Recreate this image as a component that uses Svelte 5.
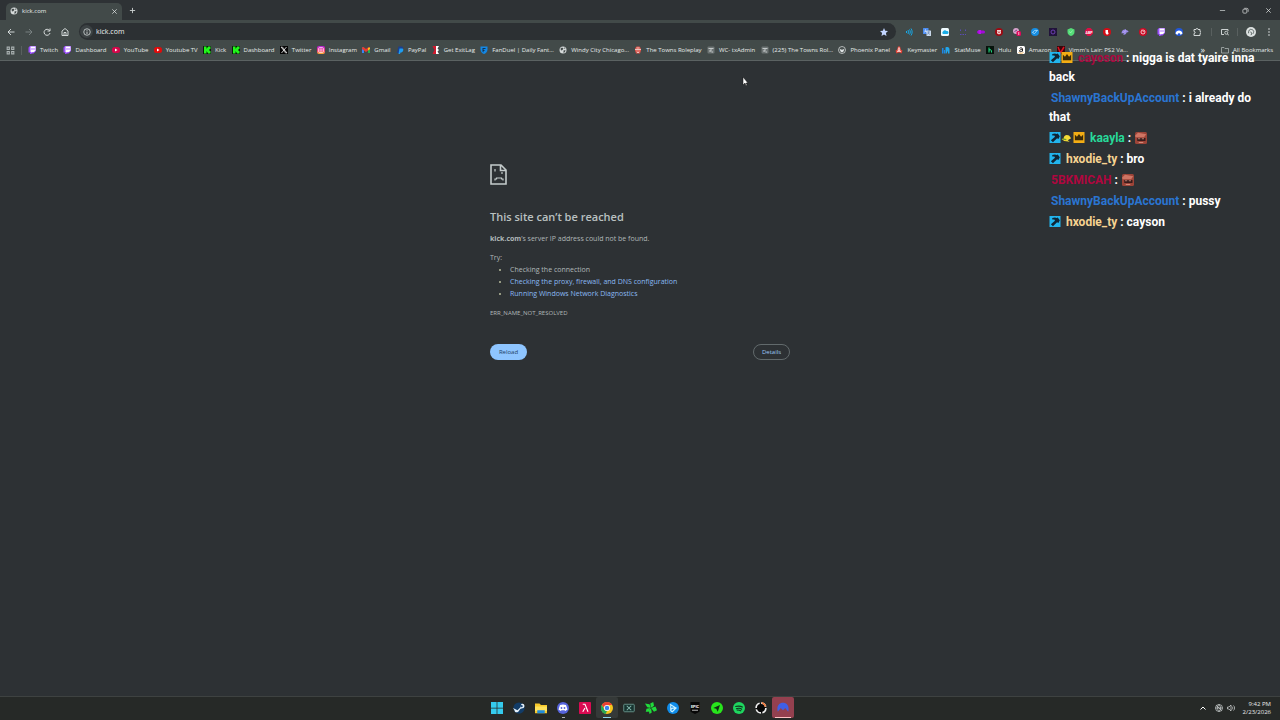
<script>
  const globe = '<circle cx="8" cy="8" r="7" fill="#d5dada"/><path d="M3 5l3-2 3 2-2 3-3 1zM9 9l4-1-1 4-3 2zM10 2l3 3-2 1z" fill="#454c4c"/>';
  const twitch = '<path d="M1 3L4 0h12v10l-5 5H8l-2 1H4v-3H1z" fill="#9b4dff"/><path d="M5 1h10v8l-3 3H9l-2 2v-2H5z" fill="#fff"/><path d="M8 4v4M12 4v4" stroke="#9b4dff" stroke-width="1.6"/>';
  const kick = '<rect width="16" height="16" rx="1" fill="#0b1a0b"/><path d="M2 1h5v4h1V3h2V1h5v5h-2v4h2v5h-5v-2H8v-2H7v4H2z" fill="#21f51b"/>';
  const admin = '<rect x="1" y="1" width="14" height="14" rx="2" fill="#6d7474"/><path d="M3 5h10M5 8l2 2-2 2M9 12h3M8 6v5" stroke="#d7dcdc" stroke-width="1.6" fill="none"/>';
  const youtube = (c) => `<rect y="2" width="16" height="12" rx="5" fill="${c}"/><path d="M6 5l5 3-5 3z" fill="#fff"/>`;
  const swirl = '<path d="M1 11c0-5 3-8 7-8l2-1v2c3 0 5 2 5 4l-4 1c0 3-3 5-7 4l2-3z" fill="#9c8be8"/><path d="M5 9l5-4" stroke="#cfc6ff"/>';

  const art = {
    globe, twitch, kick, admin, swirl,
    youtube: youtube('#d5064a'),
    youtubetv: youtube('#e00b0b'),
    x: '<rect width="16" height="16" fill="#050505"/><path d="M3 2l10 12M13 2L3 14" stroke="#fff" stroke-width="1.5"/><path d="M2 2h3l9 12h-3z" fill="none" stroke="#fff"/>',
    instagram: '<defs><linearGradient id="ig" x2="0" y2="1"><stop stop-color="#b125db"/><stop offset=".55" stop-color="#f42f80"/><stop offset="1" stop-color="#ffb62e"/></linearGradient></defs><rect width="16" height="16" rx="4" fill="url(#ig)"/><rect x="3" y="3" width="10" height="10" rx="3" fill="none" stroke="#fff" stroke-width="1.3"/><circle cx="8" cy="8" r="2.4" fill="none" stroke="#fff" stroke-width="1.3"/>',
    gmail: '<path d="M0 3h4v11H0z" fill="#3784f5"/><path d="M12 3h4v11h-4z" fill="#22b04c"/><path d="M0 3l3-1 5 4 5-4 3 1v3l-8 6-8-6z" fill="#e83b2f"/><path d="M12 4l4-1v3l-4 3z" fill="#fcc21a"/>',
    paypal: '<path d="M5 1h6c3 0 4 3 3 5s-3 4-6 4l-1 4H2z" fill="#1b3f91"/><path d="M7 5h6c2 1 2 3 1 5s-3 3-5 3l-1 3H5z" fill="#1e9df0"/>',
    exitlag: '<path d="M1 0h7v16H1l4-8z" fill="#d1192e"/><path d="M8 0h6l-3 5 3 3-3 3 3 5H8z" fill="#fff"/>',
    fanduel: '<path d="M1 1h14v6c0 5-4 8-7 9-3-1-7-4-7-9z" fill="#1387e5"/><path d="M5 4h7l-2 2H7v2h3l-2 2H7v3L5 11z" fill="#15304d"/>',
    towns: '<path d="M2 5l3-4h6l3 4v4l-2 6H4L2 9z" fill="#d9534a"/><path d="M2 7h12M5 4h6M5 10h2M9 10h2M6 13h4" stroke="#f3ded8" stroke-width="1.6"/>',
    phoenix: '<circle cx="8" cy="8" r="7" fill="none" stroke="#dfe4e4" stroke-width="1.4"/><path d="M3 5l4 3 1-3 1 3 4-3-2 6-3 2-3-2z" fill="#dfe4e4"/>',
    keymaster: '<path d="M6 1h4l2 7 3 1-2 6-4-2H7l-4 2-2-6 3-1z" fill="#e64438"/><path d="M8 3l2 6H6zM4 11h8" stroke="#fff" stroke-width="1.3" fill="none"/>',
    statmuse: '<path d="M0 4h3v11H0zM4 8h2v7H4z" fill="#1e88e5"/><path d="M7 3c5-2 8 0 8 4v8h-3V9l-3 6H7z" fill="#21a6ed"/>',
    hulu: '<rect width="16" height="16" fill="#07130c"/><path d="M6 3v10M6 8c4-2 5 0 5 5" stroke="#21e584" stroke-width="2" fill="none"/>',
    amazon: '<rect width="16" height="16" rx="3" fill="#fff"/><path d="M5 5c1-2 6-2 6 1v5M11 7c-4 0-6 1-6 3s4 2 6-1" stroke="#111" stroke-width="1.8" fill="none"/><path d="M3 13c3 2 7 2 10 0" stroke="#f39c20" stroke-width="1.4" fill="none"/>',
    vimm: '<rect width="16" height="16" fill="#38080c"/><path d="M2 2l5 12 7-12" stroke="#dc1120" stroke-width="3" fill="none"/>',

    sound: '<path d="M3 6v4M6 4c1 3 1 5 0 8M9 3c2 3 2 7 0 10M12 1c3 4 3 10 0 14" stroke="#18a8e6" stroke-width="2" fill="none"/>',
    translate: '<rect width="11" height="12" rx="1" fill="#4c8df0"/><rect x="7" y="5" width="9" height="11" rx="1" fill="#c9d8ea"/><path d="M3 9l2-6 2 6M4 7h3" stroke="#fff" fill="none"/><path d="M9 8h5M11 7c0 3-1 4-2 6M10 10l4 3" stroke="#4b6ea5" fill="none"/>',
    cloud: '<rect width="16" height="16" rx="3" fill="#effbff"/><path d="M4 12a3 3 0 010-5 4 4 0 017-1 3 3 0 012 6z" fill="#19aee8"/>',
    dots: '<path d="M3 3v3M13 3v3M2 13h3M7 13h3M12 13h2" stroke="#5a4bb8" stroke-width="2"/>',
    pill: '<rect y="5" width="16" height="6" rx="3" fill="#a408d9"/><path d="M3 4h5v8H3z" fill="#b812ec"/>',
    shield: '<circle cx="8" cy="8" r="8" fill="#9c0a13"/><path d="M4 4h8v5c0 2-2 3-4 4-2-1-4-2-4-4z" fill="#fff"/><path d="M6 5v3c0 3 4 3 4 0V5" stroke="#a00" stroke-width="1.4" fill="none"/>',
    badge: '<circle cx="6" cy="6" r="6" fill="#d8a3cd"/><path d="M3 7l5-3" stroke="#71477c" stroke-width="2"/><rect x="7" y="6" width="9" height="10" rx="3" fill="#df0759"/><path d="M11.500 8v6" stroke="#fff" stroke-width="1.4"/>',
    blue: '<circle cx="8" cy="8" r="8" fill="#168de2"/><path d="M3 9c3-4 5-5 10-4-3 1-3 4-6 6z" fill="none" stroke="#bde6ff" stroke-width="1.6"/>',
    ring: '<rect width="16" height="16" fill="#21133a"/><circle cx="8" cy="8" r="4" fill="none" stroke="#7343bd" stroke-width="1.8"/>',
    green: '<path d="M8 0l7 3v5c0 4-3 7-7 8-4-1-7-4-7-8V3z" fill="#55dc78"/><path d="M5 7l2 3 4-5" stroke="#b9ffc9" stroke-width="1.2" fill="none"/>',
    abp: '<path d="M5 0h6l5 5v6l-5 5H5l-5-5V5z" fill="#db0f45"/><text x="8" y="11" text-anchor="middle" font-family="Roboto, sans-serif" font-size="7" font-weight="700" fill="#fff">ABP</text>',
    hand: '<circle cx="8" cy="8" r="8" fill="#d30c16"/><path d="M5 5v5l2 3h3l2-4-2 1V4H5z" fill="#fff"/>',
    record: '<circle cx="8" cy="8" r="8" fill="#c80b25"/><circle cx="8" cy="8" r="4" fill="none" stroke="#fff" stroke-width="1.5"/><path d="M5 4l5 4" stroke="#ff8b94" stroke-width="2"/>',
    arc: '<circle cx="8" cy="8" r="8" fill="#2257d8"/><path d="M1 11c1-8 13-8 14 0l-4 3c0-5-6-5-6 0z" fill="#fff"/>',
    puzzle: '<path d="M2 3h4c0-3 4-3 4 0h4v4c3 0 3 4 0 4v4H2v-4c3 0 3-4 0-4z" fill="none" stroke="#e1e5e5" stroke-width="1.8"/>',
    search: '<path d="M6 13H1V3h13v3" fill="none" stroke="#dce1e1" stroke-width="1.8"/><circle cx="10.500" cy="9.500" r="3" fill="none" stroke="#dce1e1" stroke-width="1.6"/><path d="M13 12l3 3" stroke="#dce1e1" stroke-width="1.8"/>',
    avatar: '<circle cx="8" cy="8" r="8" fill="#dce1e0"/><path d="M4 10c0-5 2-7 5-6 4 1 4 4 2 7M7 8c2 0 3 2 1 5" stroke="#5d6867" stroke-width="1.6" fill="none"/>',
    menu: '<circle cx="8" cy="2" r="1.600" fill="#dce1e1"/><circle cx="8" cy="8" r="1.600" fill="#dce1e1"/><circle cx="8" cy="14" r="1.600" fill="#dce1e1"/>',

    back: '<path d="M15 8H2M8 2L2 8l6 6" stroke="#dfe4e4" stroke-width="1.8" fill="none"/>',
    forward: '<path d="M1 8h13M8 2l6 6-6 6" stroke="#7e8686" stroke-width="1.8" fill="none"/>',
    reload: '<path d="M13 5a6 6 0 101 5M14 1v5H9" stroke="#dfe4e4" stroke-width="1.900" fill="none"/>',
    home: '<path d="M2 6l6-5 6 5v9H2z" fill="none" stroke="#dfe4e4" stroke-width="1.800"/><path d="M6 14V9h4v5" fill="none" stroke="#dfe4e4" stroke-width="1.800"/>',
    info: '<circle cx="8" cy="8" r="6.500" fill="none" stroke="#dfe4e4" stroke-width="1.500"/><path d="M8 7v5M8 4v1.600" stroke="#dfe4e4" stroke-width="1.600"/>',
    star: '<path d="M8 0l2.400 5.400 5.600.6-4.200 4 1.200 6L8 13l-5 3 1.200-6L0 6l5.600-.6z" fill="#c3d6ff"/>',
    apps: '<path d="M2 2h4v4H2zM10 2h4v4h-4zM2 10h4v4H2zM10 10h4v4h-4z" fill="none" stroke="#aab2b2" stroke-width="1.800"/>',
    folder: '<path d="M1 3h5l2 2h7v9H1z" fill="none" stroke="#b6bdbd" stroke-width="1.400"/>',
    plus: '<path d="M8 2v12M2 8h12" stroke="#cfd4d4" stroke-width="2"/>',
    close: '<path d="M3 3l10 10M13 3L3 13" stroke="#e1e5e5" stroke-width="1.700"/>',
    minimize: '<path d="M2 8h12" stroke="#dfe3e3" stroke-width="1.500"/>',
    restore: '<rect x="2" y="5" width="9" height="9" rx="2" fill="none" stroke="#dfe3e3" stroke-width="1.600"/><path d="M5 3h6c2 0 3 1 3 3v5" fill="none" stroke="#dfe3e3" stroke-width="1.600"/>',

    windows: '<path d="M0 0h7.500v7.500H0zM8.500 0H16v7.500H8.500zM0 8.500h7.500V16H0zM8.500 8.500H16V16H8.500z" fill="#35cbed"/>',
    steam: '<circle cx="8" cy="8" r="7.500" fill="#123c67"/><path d="M0 8l6 3 4-4 1-4c3-2 6 2 3 5l-4 1-3 4c-3 2-5 0-5-2z" fill="#e7f2fb"/><circle cx="11.500" cy="5.500" r="1.500" fill="#1d4877"/>',
    explorer: '<path d="M0 2h6l2 2h8v11H0z" fill="#f8c92b"/><path d="M0 6h16v6H0z" fill="#ffe35c"/><path d="M3 11h10v4H3z" fill="#208cdb"/>',
    discord: '<circle cx="8" cy="8" r="8" fill="#5664dc"/><path d="M4 4c3-1 5-1 8 0l2 6-3 2-1-1H6l-1 1-3-2z" fill="#fff"/><circle cx="6" cy="8" r="1.200" fill="#5664dc"/><circle cx="10" cy="8" r="1.200" fill="#5664dc"/>',
    lambda: '<rect width="16" height="16" rx="1" fill="#d90b52"/><path d="M5 3h3l4 10M8 8l-3 5" stroke="#fff" stroke-width="1.500" fill="none"/>',
    chrome: '<circle cx="8" cy="8" r="8" fill="#f5c51d"/><path d="M1 4a8 8 0 0114 0H8L5 9z" fill="#e94134"/><path d="M1 4l4 7 3 1-2 4A8 8 0 011 4z" fill="#27a755"/><circle cx="8" cy="8" r="4" fill="#fff"/><circle cx="8" cy="8" r="3" fill="#3b84ee"/>',
    capture: '<rect x="1" y="3" width="14" height="10" rx="1" fill="#173430" stroke="#658f87" stroke-width="1.300"/><path d="M5 5l6 6M11 5l-6 6" stroke="#8abcb2" stroke-width="1.400"/>',
    leaf: '<g fill="#20db3b"><path d="M8 8L3 7 0 2l6 1z"/><path d="M8 8l-1-6 4-2 1 5z"/><path d="M8 8l6-2 2 5-4 2z"/><path d="M8 8l1 6-3 2-1-5z"/><path d="M7 8l-2 5-4 0 1-4z"/></g><circle cx="8" cy="8" r="1" fill="#1d4a22"/>',
    battlenet: '<circle cx="8" cy="8" r="8" fill="#108ce9"/><path d="M4 3l8 5-5 5c-4-2-2-6 6-5M5 12V4" stroke="#c9f1ff" stroke-width="1.500" fill="none"/>',
    epic: '<path d="M2 0h12v13l-6 3-6-3z" fill="#070707"/><text x="8" y="8" text-anchor="middle" font-family="Roboto, sans-serif" font-size="5" font-weight="700" fill="#fff">EPIC</text><path d="M4 11h8" stroke="#aaa" stroke-width="1.400"/>',
    arrow: '<circle cx="8" cy="8" r="8" fill="#28e51c"/><path d="M3 8l9-4-3 9-2-4z" fill="#102b14"/>',
    spotify: '<circle cx="8" cy="8" r="8" fill="#1ed65f"/><path d="M3 6c4-1 7-1 10 1M4 9c3-1 6-1 8 1M5 11c2-1 4 0 6 1" stroke="#10351f" stroke-width="1.500" fill="none"/>',
    dial: '<circle cx="8" cy="8" r="6.500" fill="#080808" stroke="#eee" stroke-width="2.200" stroke-dasharray="8 2"/><path d="M9 1a7 7 0 015 5" stroke="#f0793b" stroke-width="2.200" fill="none"/>',
    nord: '<path d="M1 13C-1 4 4 1 8 1s9 3 7 12l-4-5-3 3-3-3z" fill="#405fe6"/>',
    up: '<path d="M3 11l5-5 5 5" stroke="#fff" stroke-width="2" fill="none"/>',
    net: '<circle cx="8" cy="8" r="7" fill="none" stroke="#dde1e1" stroke-width="1.300"/><path d="M1 8h14M8 1c-4 5-4 9 0 14M8 1c4 5 4 9 0 14M3 3l10 10" stroke="#dde1e1" fill="none" stroke-width="1.300"/>',
    volume: '<path d="M1 6h3l4-4v12l-4-4H1z" fill="none" stroke="#e5e8e8" stroke-width="1.300"/><path d="M10 5c2 2 2 4 0 6M13 3c3 3 3 7 0 10" stroke="#e5e8e8" fill="none" stroke-width="1.300"/>',

    axe: '<rect width="16" height="16" fill="#22b5ee"/><path d="M4 3l4-1 2 1 2-1 3 4-2 4-2-1-6 6-3-3 6-5-1-2H4z" fill="#102535"/>',
    crown: '<rect width="16" height="16" fill="#f3ad14"/><path d="M2 4l3 3 3-4 3 4 3-3v8H2z" fill="#3a2a08"/>',
    cap: '<path d="M3 10c0-5 4-7 8-5l3 4-5 3 3 2-8-1-4-3z" fill="#f5dc36"/><path d="M1 10l6 1" stroke="#6b9c2b" stroke-width="2"/>',
    emote: '<rect width="16" height="16" rx="2" fill="#9c4438"/><path d="M0 5l4-4 11 2-3 4H1z" fill="#cf7564"/><path d="M3 8h11v4H3z" fill="#381b1b"/><path d="M4 9h3M9 9h3M5 14h6" stroke="#e6a18e"/>'
  };

  const bookmarks = [
    ['twitch', 'Twitch'], ['twitch', 'Dashboard'], ['youtube', 'YouTube'], ['youtubetv', 'Youtube TV'],
    ['kick', 'Kick'], ['kick', 'Dashboard'], ['x', 'Twitter'], ['instagram', 'Instagram'], ['gmail', 'Gmail'],
    ['paypal', 'PayPal'], ['exitlag', 'Get ExitLag'], ['fanduel', 'FanDuel | Daily Fant...'],
    ['globe', 'Windy City Chicago...'], ['towns', 'The Towns Roleplay'], ['admin', 'WC- txAdmin'],
    ['admin', '(225) The Towns Rol...'], ['phoenix', 'Phoenix Panel'], ['keymaster', 'Keymaster'],
    ['statmuse', 'StatMuse'], ['hulu', 'Hulu'], ['amazon', 'Amazon'], ['vimm', "Vimm's Lair: PS2 Va..."]
  ];
  const extensions = ['sound', 'translate', 'cloud', 'dots', 'pill', 'shield', 'badge', 'blue', 'ring', 'green', 'abp', 'hand', 'swirl', 'record', 'twitch', 'arc', 'puzzle'];
  const apps = ['windows', 'steam', 'explorer', 'discord', 'lambda', 'chrome', 'capture', 'leaf', 'battlenet', 'epic', 'arrow', 'spotify', 'dial', 'nord'];
  const messages = [
    { badges: ['axe', 'crown'], name: 'cayoson', color: '#a8083f', text: 'nigga is dat tyaire inna back' },
    { badges: [], name: 'ShawnyBackUpAccount', color: '#2a75d2', text: 'i already do that' },
    { badges: ['axe', 'cap', 'crown'], name: 'kaayla', color: '#27d99a', emote: true },
    { badges: ['axe'], name: 'hxodie_ty', color: '#f6d391', text: 'bro' },
    { badges: [], name: '5BKMICAH', color: '#b0063f', emote: true },
    { badges: [], name: 'ShawnyBackUpAccount', color: '#2a75d2', text: 'pussy' },
    { badges: ['axe'], name: 'hxodie_ty', color: '#f6d391', text: 'cayson' }
  ];
</script>

{#snippet icon(name)}
  <svg class="icon" viewBox="0 0 16 16" aria-hidden="true">{@html art[name]}</svg>
{/snippet}

<div class="screen">
  <header>
    <div class="tabs">
      <div class="tab">
        {@render icon('globe')}
        <span>kick.com</span>
        <button class="tiny" aria-label="Close tab">{@render icon('close')}</button>
      </div>
      <button class="new" aria-label="New tab">{@render icon('plus')}</button>
      <div class="window">
        <button aria-label="Minimize">{@render icon('minimize')}</button>
        <button aria-label="Restore">{@render icon('restore')}</button>
        <button aria-label="Close">{@render icon('close')}</button>
      </div>
    </div>
    <div class="toolbar">
      <nav class="history">
        <button aria-label="Back">{@render icon('back')}</button>
        <button aria-label="Forward">{@render icon('forward')}</button>
        <button aria-label="Reload page">{@render icon('reload')}</button>
        <button aria-label="Home">{@render icon('home')}</button>
      </nav>
      <div class="address">
        <button class="site" aria-label="Site information">{@render icon('info')}</button>
        <input aria-label="Address" value="kick.com" />
        <button aria-label="Edit bookmark">{@render icon('star')}</button>
      </div>
      <div class="extensions">
        {#each extensions as name}
          <button aria-label={name}>{@render icon(name)}</button>
        {/each}
      </div>
      <div class="profile">
        <button aria-label="Search tabs">{@render icon('search')}</button>
        <button class="avatar" aria-label="Profile">{@render icon('avatar')}</button>
        <button aria-label="Menu">{@render icon('menu')}</button>
      </div>
    </div>
    <div class="bookmarks">
      <button class="grid" aria-label="Apps">{@render icon('apps')}</button>
      <nav>
        {#each bookmarks as [name, label]}
          <a href="#top">{@render icon(name)}{label}</a>
        {/each}
      </nav>
      <button class="more" aria-label="More bookmarks">»</button>
      <a class="all" href="#top">{@render icon('folder')}All Bookmarks</a>
    </div>
  </header>

  <main>
    <svg class="sad" viewBox="0 0 17 21" aria-hidden="true">
      <path d="M1 1h10l5 5v14H1zM10.500 1v5.500H16" fill="none" stroke="#c4cbcb" stroke-width="1.600" />
      <path d="M5 5v2.500M12 8v2M5 16.500v-1.500h1.500v-1h5v1H13v1.500" fill="none" stroke="#c4cbcb" stroke-width="1.200" />
    </svg>
    <h1>This site can’t be reached</h1>
    <p><strong>kick.com</strong>’s server IP address could not be found.</p>
    <div class="try">
      <p>Try:</p>
      <ul>
        <li>Checking the connection</li>
        <li><a href="#top">Checking the proxy, firewall, and DNS configuration</a></li>
        <li><a href="#top">Running Windows Network Diagnostics</a></li>
      </ul>
    </div>
    <p class="code">ERR_NAME_NOT_RESOLVED</p>
    <div class="actions">
      <button class="reload">Reload</button>
      <button class="details">Details</button>
    </div>
  </main>

  <footer>
    <div class="apps">
      {#each apps as name}
        <button class={name} aria-label={name}>{@render icon(name)}</button>
      {/each}
    </div>
    <div class="tray">
      {@render icon('up')}
      <span>{@render icon('net')}{@render icon('volume')}</span>
      <time>9:42 PM<br />2/23/2026</time>
    </div>
  </footer>

  <section class="chat" aria-label="Chat">
    {#each messages as m}
      <p>
        {#if m.badges.length}<span class="badges">{#each m.badges as b}{@render icon(b)}{/each}</span>{/if}
        <b style:color={m.color}>{m.name}</b> : {#if m.emote}<span class="emote">{@render icon('emote')}</span>{:else}{m.text}{/if}
      </p>
    {/each}
  </section>

  <svg class="cursor" viewBox="0 0 8 12" aria-hidden="true">
    <path d="M1 1v8l2-2 1 3 1-1-1-2h2z" fill="#fff" stroke="#111" stroke-width=".5" />
  </svg>
</div>

<style>
  :global(body) { margin: 0; background: #2d3134; }
  * { box-sizing: border-box; }
  button { display: flex; align-items: center; justify-content: center; padding: 0; border: 0; background: none; color: inherit; font: inherit; }
  a { color: inherit; text-decoration: none; }
  h1, p, ul { margin: 0; }
  .icon { display: block; flex: none; width: 8px; height: 8px; }
  .screen { position: relative; display: flex; flex-direction: column; min-height: 100vh; overflow: hidden; background: #2d3134; color: #e6eaea; font: 6px/12px "Open Sans", "Noto Sans", sans-serif; }

  header { border-bottom: 1px solid #5b6262; background: #424a49; }
  .tabs { display: flex; align-items: flex-end; height: 20px; padding-left: 6px; background: #2e3235; }
  .tab { display: flex; align-items: center; gap: 4px; width: 116px; height: 17px; padding: 0 4px 1px; border-radius: 5px 5px 0 0; background: #424a49; }
  .tab span { flex: 1; }
  .tiny .icon, .new .icon { width: 7px; height: 7px; }
  .new { width: 20px; height: 20px; }
  .window { display: flex; height: 20px; margin-left: auto; }
  .window button { width: 23px; }
  .window .icon { width: 7px; height: 7px; }

  .toolbar { display: flex; align-items: center; height: 22px; padding: 1px 2px 0 0; }
  .history { display: flex; width: 79px; padding-left: 2px; }
  .history button { width: 18px; }
  .address { display: flex; flex: 1; align-items: center; height: 17px; padding: 0 8px 0 1px; border-radius: 9px; background: #2c3033; }
  .site { width: 13px; height: 13px; border-radius: 7px; background: #3c4244; }
  .address input { flex: 1; min-width: 0; padding: 0 0 0 3px; border: 0; outline: 0; background: none; color: #eef1f1; font: 7px/12px "Open Sans", "Noto Sans", sans-serif; }
  .extensions { display: flex; padding-left: 4px; }
  .extensions button { width: 18px; }
  .profile { display: flex; align-items: center; margin-left: 5px; }
  .profile button { width: 18px; }
  .profile button:first-child { width: 27px; border: 1px solid #59605f; border-width: 0 1px; }
  .profile .avatar { margin-left: 4px; }
  .avatar .icon { width: 10px; height: 10px; }

  .bookmarks { display: flex; align-items: center; height: 18px; padding: 0 7px 2px 6px; white-space: nowrap; }
  .grid { width: 16px; padding-right: 6px; border-right: 1px solid #59605f; }
  .grid .icon { width: 9px; height: 9px; }
  .bookmarks nav { display: flex; flex: 0 1 1100px; justify-content: space-between; margin-left: 6px; }
  .bookmarks a { display: flex; align-items: center; gap: 4px; }
  .more { margin: 0 16px 0 auto; font-size: 9px; }

  main { flex: 1; width: 300px; margin: 0 auto; padding-top: 103px; color: #b0b8b8; font-size: 7px; }
  .sad { display: block; width: 17px; height: 21px; }
  h1 { margin: 23px 0 7px; color: #bac1c1; font-size: 11px; font-weight: 600; line-height: 18px; }
  .try { margin-top: 7px; }
  ul { padding-left: 20px; }
  li::marker { color: #b9bc9c; }
  li a { color: #8ab9f2; }
  .code { margin-top: 7px; font-size: 6px; }
  .actions { display: flex; justify-content: space-between; margin-top: 25px; font-size: 6px; }
  .actions button { width: 37px; height: 16px; border-radius: 8px; }
  .reload { background: #8ec5ff; color: #23415f; }
  .details { border: 1px solid #626a6c; color: #9cc7f5; }

  footer { display: grid; grid-template-columns: 1fr auto 1fr; height: 24px; border-top: 1px solid #3e4241; background: #262927; }
  .apps { display: flex; grid-column: 2; align-items: flex-start; }
  .apps button { position: relative; width: 22px; height: 21px; border-radius: 2px; }
  .apps .icon { width: 12px; height: 12px; }
  .apps .chrome { background: #353938; }
  .apps .nord { background: #94404f; }
  .chrome::after, .nord::after, .discord::after { position: absolute; bottom: 0; width: 8px; height: 1px; background: #8ed4ee; content: ""; }
  .nord::after { width: 16px; background: #ffc2c4; }
  .discord::after { width: 3px; background: #aeb3b3; }
  .tray { display: flex; align-items: center; justify-content: flex-end; gap: 8px; padding: 0 9px 1px 0; line-height: 8px; text-align: right; }
  .tray span { display: flex; gap: 4px; }

  .chat { position: absolute; top: 49px; right: 10px; display: grid; gap: 2px; width: 221px; color: #fff; font: 700 12px/19px Roboto, sans-serif; }
  .badges { display: inline-flex; vertical-align: -1px; }
  .badges .icon { width: 12px; height: 11px; }
  .emote { display: inline-block; margin-left: 1px; vertical-align: -2px; }
  .emote .icon { width: 12px; height: 12px; }
  .chat b { margin-left: 2px; font-weight: 700; }
  .cursor { position: absolute; top: 76px; left: 742px; width: 8px; height: 12px; }
</style>
